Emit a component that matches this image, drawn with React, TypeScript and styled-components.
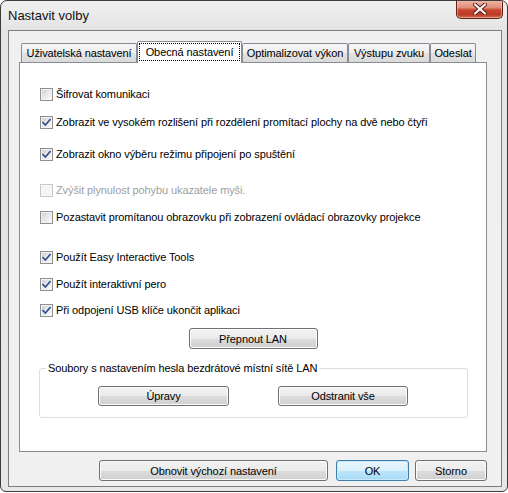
import React from 'react';
import styled, { createGlobalStyle } from 'styled-components';

const GlobalStyle = createGlobalStyle`
  html, body { margin: 0; padding: 0; background: #ffffff; }
  body {
    font-family: "Liberation Sans", Arial, sans-serif;
    font-size: 11px;
    letter-spacing: -0.1px;
    color: #000;
  }
  * { box-sizing: border-box; }
`;

const Window = styled.div`
  width: 508px;
  height: 492px;
  border: 1px solid #3c3c3c;
  border-radius: 7px 7px 6px 6px;
  background: linear-gradient(180deg, #f0f0f0 0px, #e4e4e4 29px, #e7e7e7 100%);
  padding: 0 5px 4px 7px;
  display: flex;
  flex-direction: column;
  overflow: hidden;
`;

const TitleBar = styled.div`
  height: 29px;
  flex-shrink: 0;
  display: flex;
  justify-content: space-between;
  align-items: flex-start;
`;

const Title = styled.span`
  font-size: 13px;
  line-height: 16px;
  letter-spacing: 0;
  margin-top: 7px;
  color: #111;
`;

const CloseButton = styled.div`
  width: 47px;
  height: 19px;
  margin: -1px -1px 0 0;
  border: 1px solid #5e2118;
  border-top: none;
  border-radius: 0 0 5px 5px;
  background: linear-gradient(180deg, #efb9aa 0%, #de8d77 42%, #c9452f 55%, #bd3a25 82%, #d8735b 100%);
  box-shadow: inset 0 0 0 1px rgba(255, 220, 210, 0.45);
  display: flex;
  align-items: center;
  justify-content: center;
`;

const Client = styled.div`
  flex: 1;
  background: #f0f0f0;
  border: 1px solid #7e7e7e;
  padding: 10px 14px 5px 10px;
  display: flex;
  flex-direction: column;
`;

const TabStrip = styled.div`
  height: 21px;
  flex-shrink: 0;
  display: flex;
  align-items: flex-end;
  padding-left: 2px;
  position: relative;
  z-index: 1;
`;

const Tab = styled.div<{ $active?: boolean; $w: number }>`
  width: ${(p) => p.$w}px;
  height: ${(p) => (p.$active ? 22 : 19)}px;
  margin-bottom: ${(p) => (p.$active ? -1 : 0)}px;
  border: 1px solid #898c95;
  border-bottom: none;
  border-radius: 2px 2px 0 0;
  background: ${(p) =>
    p.$active
      ? '#ffffff'
      : 'linear-gradient(180deg, #f6f6f6 0%, #eeeeee 50%, #e3e3e3 50%, #dadada 100%)'};
  padding: ${(p) => (p.$active ? '1px 1px 2px 1px' : '0')};
  display: flex;
  align-items: stretch;
`;

const TabLabel = styled.span<{ $focus?: boolean }>`
  flex: 1;
  display: flex;
  align-items: center;
  justify-content: center;
  white-space: nowrap;
  border: 1px dotted ${(p) => (p.$focus ? '#000' : 'transparent')};
`;

const Panel = styled.div`
  height: 390px;
  flex-shrink: 0;
  background: #ffffff;
  border: 1px solid #898c95;
  padding: 0 20px;
  display: flex;
  flex-direction: column;
  align-items: flex-start;
`;

const Row = styled.label<{ $mt: number; $disabled?: boolean }>`
  height: 16px;
  margin-top: ${(p) => p.$mt}px;
  display: flex;
  align-items: center;
  gap: 3px;
  white-space: nowrap;
  color: ${(p) => (p.$disabled ? '#a0a0a0' : '#000')};
`;

const Box = styled.span<{ $disabled?: boolean }>`
  width: 13px;
  height: 13px;
  flex-shrink: 0;
  border: 1px solid ${(p) => (p.$disabled ? '#c8c8c8' : '#8e8f8f')};
  background: ${(p) =>
    p.$disabled
      ? '#f4f4f4'
      : 'linear-gradient(135deg, #c9ccd2 0%, #e4e6e9 45%, #fbfbfb 100%)'};
  box-shadow: inset 0 0 0 1px ${(p) => (p.$disabled ? '#f8f8f8' : '#f4f4f4')};
  display: flex;
  align-items: center;
  justify-content: center;
`;

const Button = styled.button<{ $w: number; $h?: number; $default?: boolean }>`
  width: ${(p) => p.$w}px;
  height: ${(p) => p.$h ?? 21}px;
  flex-shrink: 0;
  font-family: "Liberation Sans", Arial, sans-serif;
  font-size: 11px;
  font-weight: 400;
  letter-spacing: -0.1px;
  color: #000;
  padding: 0;
  border: 1px solid ${(p) => (p.$default ? '#3c7fb1' : '#707070')};
  border-radius: 3px;
  background: ${(p) =>
    p.$default
      ? 'linear-gradient(180deg, #eaf6fd 0%, #d9f0fc 50%, #bee6fd 50%, #a7d9f5 100%)'
      : 'linear-gradient(180deg, #f2f2f2 0%, #ebebeb 50%, #dddddd 50%, #cfcfcf 100%)'};
  box-shadow: inset 0 0 0 1px ${(p) => (p.$default ? '#c6e9fb' : '#fcfcfc')};
`;

const CenterButtonRow = styled.div`
  align-self: stretch;
  margin-top: 10px;
  display: flex;
  justify-content: center;
`;

const Group = styled.fieldset`
  margin: 13px 0 0 -1px;
  width: 429px;
  border: 1px solid #d5dfe5;
  border-radius: 3px;
  padding: 0 0 11px 0;
  min-width: 0;
`;

const Legend = styled.legend`
  margin-left: 6px;
  padding: 0 2px;
  font-size: 11px;
  line-height: 13px;
`;

const GroupButtons = styled.div`
  margin-top: 11px;
  padding-left: 58px;
  display: flex;
  gap: 49px;
`;

const Footer = styled.div`
  margin-top: 8px;
  display: flex;
  justify-content: flex-end;
  align-items: center;
`;

const FooterGap = styled.span<{ $w: number }>`
  width: ${(p) => p.$w}px;
  flex-shrink: 0;
`;

const CheckMark = () => (
  <svg width="9" height="9" viewBox="0 0 9 9">
    <path d="M1 4.6 L3.4 7 L8 1.6" fill="none" stroke="#34508e" strokeWidth="1.7" strokeLinecap="square" />
  </svg>
);

const CloseX = () => (
  <svg width="16" height="12" viewBox="0 0 16 12">
    <path d="M3 1.5 L13 10.5 M13 1.5 L3 10.5" stroke="#5a1a12" strokeWidth="4" strokeLinecap="round" />
    <path d="M3 1.5 L13 10.5 M13 1.5 L3 10.5" stroke="#ffffff" strokeWidth="2.2" strokeLinecap="round" />
  </svg>
);

type Opt = { label: string; checked?: boolean; disabled?: boolean; mt: number };

const options: Opt[] = [
  { label: 'Šifrovat komunikaci', mt: 23 },
  { label: 'Zobrazit ve vysokém rozlišení při rozdělení promítací plochy na dvě nebo čtyři', checked: true, mt: 12 },
  { label: 'Zobrazit okno výběru režimu připojení po spuštění', checked: true, mt: 16 },
  { label: 'Zvýšit plynulost pohybu ukazatele myši.', disabled: true, mt: 20 },
  { label: 'Pozastavit promítanou obrazovku při zobrazení ovládací obrazovky projekce', mt: 11 },
  { label: 'Použít Easy Interactive Tools', checked: true, mt: 24 },
  { label: 'Použít interaktivní pero', checked: true, mt: 11 },
  { label: 'Při odpojení USB klíče ukončit aplikaci', checked: true, mt: 10 },
];

const tabs = [
  { label: 'Uživatelská nastavení', w: 116 },
  { label: 'Obecná nastavení', w: 105, active: true },
  { label: 'Optimalizovat výkon', w: 106 },
  { label: 'Výstupu zvuku', w: 82 },
  { label: 'Odeslat', w: 46 },
];

export default function App() {
  return (
    <>
      <GlobalStyle />
      <Window>
        <TitleBar>
          <Title>Nastavit volby</Title>
          <CloseButton>
            <CloseX />
          </CloseButton>
        </TitleBar>
        <Client>
          <TabStrip>
            {tabs.map((t) => (
              <Tab key={t.label} $w={t.w} $active={t.active}>
                <TabLabel $focus={t.active}>{t.label}</TabLabel>
              </Tab>
            ))}
          </TabStrip>
          <Panel>
            {options.map((o) => (
              <Row key={o.label} $mt={o.mt} $disabled={o.disabled}>
                <Box $disabled={o.disabled}>{o.checked && <CheckMark />}</Box>
                <span>{o.label}</span>
              </Row>
            ))}
            <CenterButtonRow>
              <Button $w={129}>Přepnout LAN</Button>
            </CenterButtonRow>
            <Group>
              <Legend>Soubory s nastavením hesla bezdrátové místní sítě LAN</Legend>
              <GroupButtons>
                <Button $w={131} $h={20}>Úpravy</Button>
                <Button $w={130} $h={20}>Odstranit vše</Button>
              </GroupButtons>
            </Group>
          </Panel>
          <Footer>
            <Button $w={229}>Obnovit výchozí nastavení</Button>
            <FooterGap $w={8} />
            <Button $w={73} $default>OK</Button>
            <FooterGap $w={6} />
            <Button $w={72}>Storno</Button>
          </Footer>
        </Client>
      </Window>
    </>
  );
}
